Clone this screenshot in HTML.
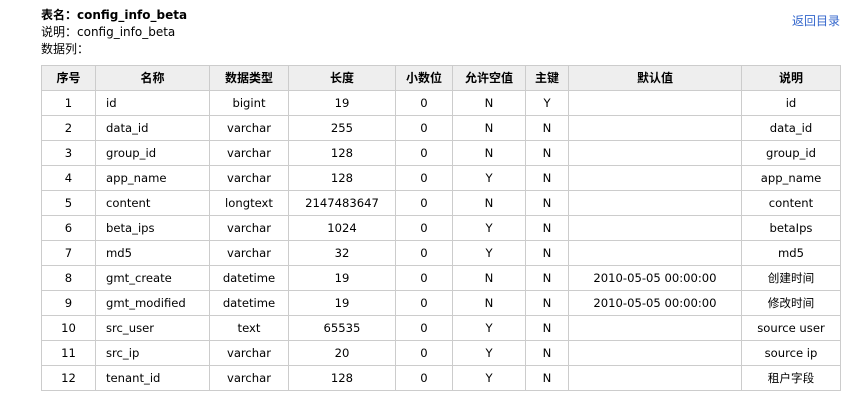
<!DOCTYPE html>
<html><head><meta charset="utf-8"><style>
body{margin:0;background:#fff;font-family:"DejaVu Sans","Noto Sans CJK SC",sans-serif;font-size:12px;color:#000;}
.t{position:absolute;left:41px;line-height:17px;}
a{position:absolute;left:792px;top:12px;color:#36c;text-decoration:none;font-size:12px;}
table{position:absolute;left:41px;top:65px;border-collapse:collapse;table-layout:fixed;}
td,th{border:1px solid #ccc;height:24px;line-height:14px;padding:0;text-align:center;font-size:11.6px;white-space:nowrap;overflow:hidden;vertical-align:middle;}
th{background:#eee;font-weight:bold;font-size:12px;}
td.l{text-align:left;padding-left:10px;}
</style></head><body>
<div class="t" style="top:7px;font-weight:bold">表名：config_info_beta</div>
<div class="t" style="top:24px">说明：config_info_beta</div>
<div class="t" style="top:41px">数据列：</div>
<a>返回目录</a>
<table>
<colgroup><col style="width:54px"><col style="width:114px"><col style="width:79px"><col style="width:107px"><col style="width:57px"><col style="width:73px"><col style="width:43px"><col style="width:173px"><col style="width:99px"></colgroup>
<tr><th>序号</th><th>名称</th><th>数据类型</th><th>长度</th><th>小数位</th><th>允许空值</th><th>主键</th><th>默认值</th><th>说明</th></tr>
<tr><td>1</td><td class="l">id</td><td>bigint</td><td>19</td><td>0</td><td>N</td><td>Y</td><td></td><td>id</td></tr>
<tr><td>2</td><td class="l">data_id</td><td>varchar</td><td>255</td><td>0</td><td>N</td><td>N</td><td></td><td>data_id</td></tr>
<tr><td>3</td><td class="l">group_id</td><td>varchar</td><td>128</td><td>0</td><td>N</td><td>N</td><td></td><td>group_id</td></tr>
<tr><td>4</td><td class="l">app_name</td><td>varchar</td><td>128</td><td>0</td><td>Y</td><td>N</td><td></td><td>app_name</td></tr>
<tr><td>5</td><td class="l">content</td><td>longtext</td><td>2147483647</td><td>0</td><td>N</td><td>N</td><td></td><td>content</td></tr>
<tr><td>6</td><td class="l">beta_ips</td><td>varchar</td><td>1024</td><td>0</td><td>Y</td><td>N</td><td></td><td>betaIps</td></tr>
<tr><td>7</td><td class="l">md5</td><td>varchar</td><td>32</td><td>0</td><td>Y</td><td>N</td><td></td><td>md5</td></tr>
<tr><td>8</td><td class="l">gmt_create</td><td>datetime</td><td>19</td><td>0</td><td>N</td><td>N</td><td>2010-05-05 00:00:00</td><td>创建时间</td></tr>
<tr><td>9</td><td class="l">gmt_modified</td><td>datetime</td><td>19</td><td>0</td><td>N</td><td>N</td><td>2010-05-05 00:00:00</td><td>修改时间</td></tr>
<tr><td>10</td><td class="l">src_user</td><td>text</td><td>65535</td><td>0</td><td>Y</td><td>N</td><td></td><td>source user</td></tr>
<tr><td>11</td><td class="l">src_ip</td><td>varchar</td><td>20</td><td>0</td><td>Y</td><td>N</td><td></td><td>source ip</td></tr>
<tr><td>12</td><td class="l">tenant_id</td><td>varchar</td><td>128</td><td>0</td><td>Y</td><td>N</td><td></td><td>租户字段</td></tr>
</table>
</body></html>
